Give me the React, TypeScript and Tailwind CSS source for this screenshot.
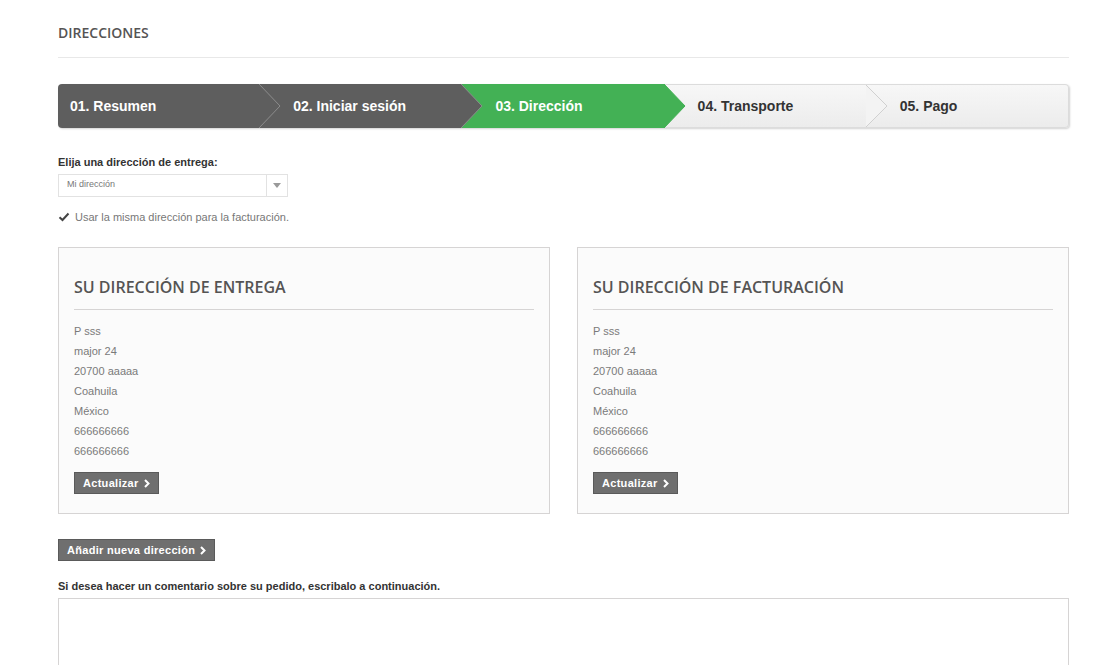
import React from "react";

type Step = {
    label: string;
    tone: "dark" | "green" | "light";
};

const steps: Step[] = [
    { label: "01. Resumen", tone: "dark" },
    { label: "02. Iniciar sesión", tone: "dark" },
    { label: "03. Dirección", tone: "green" },
    { label: "04. Transporte", tone: "light" },
    { label: "05. Pago", tone: "light" },
];

const toneFill: Record<Step["tone"], string> = {
    dark: "#5e5e5e",
    green: "#43b155",
    light: "#f3f3f3",
};

const toneLine: Record<Step["tone"], string> = {
    dark: "#8c8c8c",
    green: "#43b155",
    light: "#cfcfcf",
};

const address = [
    "P sss",
    "major 24",
    "20700 aaaaa",
    "Coahuila",
    "México",
    "666666666",
    "666666666",
];

function Chevron() {
    return (
        <svg width="6" height="9" viewBox="0 0 6 9" className="ml-[5px]">
            <path d="M1 1 L4.5 4.5 L1 8" fill="none" stroke="#fff" strokeWidth="2" />
        </svg>
    );
}

function DarkButton({ children }: { children: React.ReactNode }) {
    return (
        <button className="flex h-[22px] items-center border border-[#5a5a5a] bg-[#6f6f6f] px-[8px] text-[11px] font-bold tracking-[0.3px] text-white [font-family:'Liberation_Sans',Arial,sans-serif]">
            {children}
            <Chevron />
        </button>
    );
}

function Stepper() {
    return (
        <div className="grid h-[44px] grid-cols-5 rounded-[4px] shadow-[1px_1px_2px_rgba(0,0,0,0.18)]">
            {steps.map((step, i) => {
                const last = i === steps.length - 1;
                const bg =
                    step.tone === "dark"
                        ? "bg-[#5e5e5e] text-white"
                        : step.tone === "green"
                          ? "bg-[#43b155] text-white"
                          : "bg-gradient-to-b from-[#f7f7f7] to-[#ececec] text-[#333] border-y border-[#dcdcdc]";
                const rounded =
                    i === 0 ? "rounded-l-[4px]" : last ? "rounded-r-[4px] border-r" : "";
                const pad = i === 0 ? "pl-[12px]" : "pl-[33px]";
                return (
                    <div
                        key={step.label}
                        className={`relative flex items-center ${bg} ${rounded} ${pad}`}
                        style={{ zIndex: 10 - i }}
                    >
                        <span className="text-[14px] font-bold [font-family:'Liberation_Sans',Arial,sans-serif]">
                            {step.label}
                        </span>
                        {!last && (
                            <svg
                                className="absolute right-[-21px] top-0 h-full"
                                width="22"
                                viewBox="0 0 22 44"
                                preserveAspectRatio="none"
                            >
                                <polygon points="0,0 21,22 0,44" fill={toneFill[step.tone]} />
                                <polyline
                                    points="0,0 21,22 0,44"
                                    fill="none"
                                    stroke={toneLine[step.tone]}
                                    strokeWidth="1"
                                />
                            </svg>
                        )}
                    </div>
                );
            })}
        </div>
    );
}

function AddressBox({ title }: { title: string }) {
    return (
        <div className="flex-1 border border-[#d6d4d4] bg-[#fbfbfb] px-[15px] pb-[19px] pt-[27px]">
            <h3 className="border-b border-[#d6d4d4] pb-[10px] text-[16px] font-semibold uppercase text-[#555454] [font-family:'Open_Sans',sans-serif]">
                {title}
            </h3>
            <ul className="mt-[11px] text-[11px] leading-[20px] text-[#7a7a7a] [font-family:'Liberation_Sans',Arial,sans-serif]">
                {address.map((line, i) => (
                    <li key={i}>{line}</li>
                ))}
            </ul>
            <div className="mt-[11px]">
                <DarkButton>Actualizar</DarkButton>
            </div>
        </div>
    );
}

export default function App() {
    return (
        <div className="min-h-[665px] bg-white pl-[58px] pr-[31px] pt-[22px] [font-family:'Liberation_Sans',Arial,sans-serif]">
            <h1 className="border-b border-[#e8e8e8] pb-[14px] text-[14px] font-semibold uppercase text-[#555454] [font-family:'Open_Sans',sans-serif]">
                Direcciones
            </h1>

            <div className="mt-[26px]">
                <Stepper />
            </div>

            <div className="mt-[26px]">
                <label className="block text-[11px] font-bold text-[#333]">
                    Elija una dirección de entrega:
                </label>
                <div className="mt-[3px] flex h-[23px] w-[230px] items-center border border-[#e2e2e2] bg-white">
                    <span className="flex-1 pl-[8px] text-[9px] text-[#777]">Mi dirección</span>
                    <span className="flex h-full w-[21px] items-center justify-center border-l border-[#e2e2e2]">
                        <svg width="8" height="5" viewBox="0 0 8 5">
                            <polygon points="0,0 8,0 4,5" fill="#9a9a9a" />
                        </svg>
                    </span>
                </div>
                <div className="mt-[12px] flex items-center gap-[5px]">
                    <svg width="12" height="12" viewBox="0 0 12 12">
                        <path d="M1.5 6.2 L4.5 9 L10.5 2.5" fill="none" stroke="#444" strokeWidth="2" />
                    </svg>
                    <span className="text-[11px] text-[#777]">
                        Usar la misma dirección para la facturación.
                    </span>
                </div>
            </div>

            <div className="mt-[22px] flex gap-[27px]">
                <AddressBox title="Su dirección de entrega" />
                <AddressBox title="Su dirección de facturación" />
            </div>

            <div className="mt-[25px]">
                <DarkButton>Añadir nueva dirección</DarkButton>
            </div>

            <p className="mt-[17px] text-[11px] font-bold text-[#333]">
                Si desea hacer un comentario sobre su pedido, escribalo a continuación.
            </p>
            <textarea className="mt-[3px] block h-[90px] w-full resize-none border border-[#d6d4d4] bg-white" />
        </div>
    );
}
